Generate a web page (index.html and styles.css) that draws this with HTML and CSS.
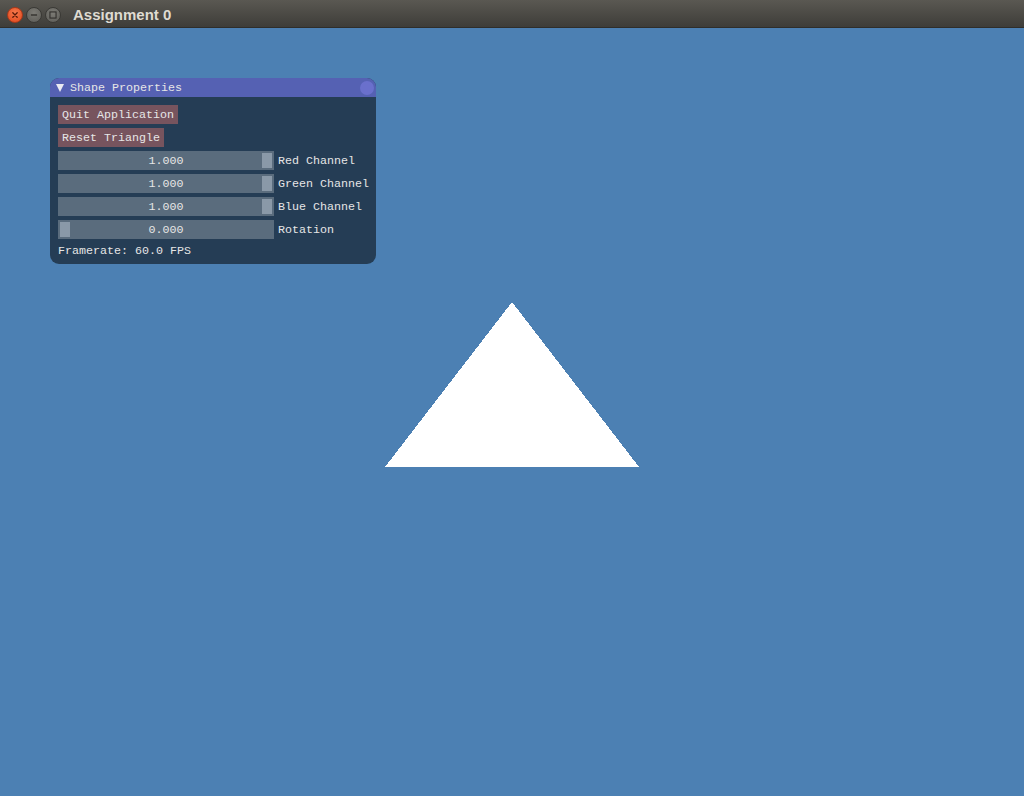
FILE: index.html
```html
<!DOCTYPE html>
<html>
<head>
<meta charset="utf-8">
<title>Assignment 0</title>
<link rel="stylesheet" href="styles.css">
</head>
<body>
<div class="app">
  <header class="titlebar">
    <div class="wm-buttons">
      <span class="wm-btn wm-close">
        <svg width="16" height="16" viewBox="0 0 16 16"><path d="M5.5 5.5 L10.5 10.5 M10.5 5.5 L5.5 10.5" stroke="#5a1a08" stroke-width="1.5" stroke-linecap="round"/></svg>
      </span>
      <span class="wm-btn wm-gray">
        <svg width="16" height="16" viewBox="0 0 16 16"><path d="M4.5 8 H11.5" stroke="#2e2d2a" stroke-width="1.5"/></svg>
      </span>
      <span class="wm-btn wm-gray">
        <svg width="16" height="16" viewBox="0 0 16 16"><rect x="4.5" y="4.5" width="7" height="7" fill="none" stroke="#2e2d2a" stroke-width="1.2"/></svg>
      </span>
    </div>
    <span class="app-title">Assignment 0</span>
  </header>
  <main class="canvas">
    <svg class="scene" width="1024" height="768" viewBox="0 0 1024 768">
      <polygon points="512,274 385,439 639,439" fill="#ffffff" shape-rendering="crispEdges"/>
    </svg>
    <section class="imgui-window">
      <div class="imgui-title">
        <span class="collapse-arrow"></span>
        <span class="imgui-title-text">Shape Properties</span>
        <span class="imgui-close"></span>
      </div>
      <div class="imgui-body">
        <div class="row"><button class="imgui-btn">Quit Application</button></div>
        <div class="row"><button class="imgui-btn">Reset Triangle</button></div>
        <div class="row">
          <div class="slider"><span class="slider-value">1.000</span><span class="grab grab-max"></span></div>
          <span class="label">Red Channel</span>
        </div>
        <div class="row">
          <div class="slider"><span class="slider-value">1.000</span><span class="grab grab-max"></span></div>
          <span class="label">Green Channel</span>
        </div>
        <div class="row">
          <div class="slider"><span class="slider-value">1.000</span><span class="grab grab-max"></span></div>
          <span class="label">Blue Channel</span>
        </div>
        <div class="row">
          <div class="slider"><span class="slider-value">0.000</span><span class="grab grab-min"></span></div>
          <span class="label">Rotation</span>
        </div>
        <div class="row text-row">Framerate: 60.0 FPS</div>
      </div>
    </section>
  </main>
</div>
</body>
</html>
```

FILE: styles.css
```css
html, body {
  margin: 0;
  padding: 0;
  width: 1024px;
  height: 796px;
  overflow: hidden;
  background: #4c80b3;
}

.app {
  display: flex;
  flex-direction: column;
  width: 1024px;
  height: 796px;
}

.titlebar {
  height: 28px;
  flex: 0 0 28px;
  display: flex;
  align-items: center;
  background: linear-gradient(#5a5852, #3e3d39);
  box-sizing: border-box;
  border-bottom: 1px solid #2f2e2b;
}

.wm-buttons {
  display: flex;
  gap: 3px;
  padding-left: 7px;
  align-items: center;
  padding-top: 2px;
}

.wm-btn {
  width: 16px;
  height: 16px;
  border-radius: 50%;
  display: flex;
  align-items: center;
  justify-content: center;
  box-sizing: border-box;
}

.wm-close {
  background: radial-gradient(circle at 50% 35%, #f57a4d, #e2461a);
  border: 1px solid #a8391a;
}

.wm-gray {
  background: radial-gradient(circle at 50% 35%, #7c7b75, #5c5b56);
  border: 1px solid #3a3935;
}

.app-title {
  margin-left: 12px;
  font-family: "Liberation Sans", "DejaVu Sans", sans-serif;
  font-weight: bold;
  font-size: 15px;
  color: #dfdbd2;
  padding-top: 1px;
}

.canvas {
  flex: 1;
  position: relative;
  background: #4c80b3;
}

.scene {
  position: absolute;
  left: 0;
  top: 0;
}

.imgui-window {
  position: absolute;
  left: 50px;
  top: 50px;
  width: 326px;
  height: 186px;
  border-radius: 9px;
  overflow: hidden;
  background: #253d55;
  font-family: "Liberation Mono", "DejaVu Sans Mono", monospace;
  font-size: 11.67px;
  line-height: 13px;
  color: #e6e6e6;
  display: flex;
  flex-direction: column;
}

.imgui-title {
  height: 19px;
  flex: 0 0 19px;
  background: #5561b3;
  display: flex;
  align-items: center;
  padding-left: 6px;
}

.collapse-arrow {
  width: 0;
  height: 0;
  border-left: 4.5px solid transparent;
  border-right: 4.5px solid transparent;
  border-top: 8px solid #eaeaf2;
  margin-right: 6px;
  margin-top: 1px;
}

.imgui-title-text {
  flex: 1;
  white-space: pre;
  padding-top: 2px;
}

.imgui-close {
  width: 14px;
  height: 14px;
  border-radius: 50%;
  background: #6a70cc;
  margin-right: 2px;
}

.imgui-body {
  padding: 8px 8px 0 8px;
  display: flex;
  flex-direction: column;
  gap: 4px;
}

.row {
  display: flex;
  align-items: center;
  gap: 4px;
  height: 19px;
}

.imgui-btn {
  font: inherit;
  color: inherit;
  background: #77545e;
  border: 0;
  margin: 0;
  padding: 4px 4px 2px 4px;
  height: 19px;
  line-height: 13px;
  white-space: pre;
}

.slider {
  position: relative;
  flex: 0 0 216px;
  width: 216px;
  height: 19px;
  background: #5a6c7d;
  display: flex;
  align-items: center;
  justify-content: center;
}

.slider-value {
  white-space: pre;
  padding-top: 2px;
}

.grab {
  position: absolute;
  top: 2px;
  width: 10px;
  height: 15px;
  background: #8a99a8;
}

.grab-max {
  right: 2px;
}

.grab-min {
  left: 2px;
}

.label {
  white-space: pre;
  flex: 0 0 auto;
  padding-top: 2px;
}

.text-row {
  height: 13px;
  margin-top: 2px;
  white-space: pre;
}
```
